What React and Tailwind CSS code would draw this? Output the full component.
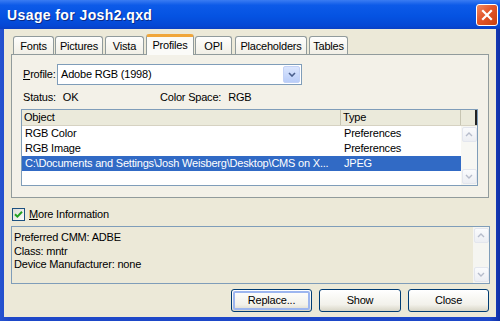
import React from "react";

function Chevron({ up = false, color = "#4d6185", w = 8, h = 5, sw = 1.6 }) {
  return (
    <svg width={w} height={h} viewBox="0 0 8 5">
      <path
        d={up ? "M1 4 L4 1 L7 4" : "M1 1 L4 4 L7 1"}
        fill="none"
        stroke={color}
        strokeWidth={sw}
      />
    </svg>
  );
}

function ScrollBtn({ up }) {
  return (
    <div className="w-[15px] h-[15px] rounded-[2px] border border-[#e3e6ee] bg-[linear-gradient(#fafbfd,#eceef3)] flex items-center justify-center">
      <Chevron up={up} color="#b6bccb" sw={1.4} />
    </div>
  );
}

const tabs = [
  { label: "Fonts", cls: "ml-0 w-[41px]" },
  { label: "Pictures", cls: "ml-[1px] w-[48px]" },
  { label: "Vista", cls: "ml-[2px] w-[39px]" },
  { label: "Profiles", cls: "ml-[2px] w-[48px]", active: true },
  { label: "OPI", cls: "ml-[1px] w-[37px]" },
  { label: "Placeholders", cls: "ml-[3px] w-[72px]" },
  { label: "Tables", cls: "ml-[2px] w-[39px]" },
];

export default function App() {
  return (
    <div className="w-[500px] h-[321px] overflow-hidden flex flex-col bg-[linear-gradient(90deg,#2654d0,#1d47c8_2%,#1d47c8_98%,#0e2fa6)] font-['Liberation_Sans',Arial,sans-serif] text-[11px] tracking-[-0.2px] leading-none text-black">
      {/* Title bar */}
      <div className="h-[29px] shrink-0 flex items-center justify-between pl-[7px] pr-[2px] bg-[linear-gradient(#3a7cf2,#0c5ae8_18%,#0553e2_55%,#0547d4_90%,#0a3fc4)]">
        <span className="text-white font-bold text-[14px] tracking-[0.4px] [text-shadow:1px_1px_0_#0b2a86]">
          Usage for Josh2.qxd
        </span>
        <div className="w-[22px] h-[22px] mt-[1px] rounded-[3px] border border-white bg-[linear-gradient(135deg,#f08a62,#e2552a_45%,#c9400f)] flex items-center justify-center">
          <svg width="12" height="12" viewBox="0 0 12 12">
            <path d="M2 2 L10 10 M10 2 L2 10" stroke="white" strokeWidth="2.2" strokeLinecap="square" />
          </svg>
        </div>
      </div>

      {/* Body */}
      <div className="flex-1 mx-[4px] mb-[4px] bg-[#ece9d8] flex flex-col">
        {/* Tabs */}
        <div className="flex items-end h-[20px] mt-[5px] pl-[9px] relative z-10">
          {tabs.map((t) =>
            t.active ? (
              <div
                key={t.label}
                className={`${t.cls} h-[21px] -mb-[1px] flex items-center justify-center bg-[#fbfbf8] border-x border-[#919b9c] rounded-t-[3px] border-t-[3px] border-t-[#f0a63a] pb-[2px]`}
              >
                {t.label}
              </div>
            ) : (
              <div
                key={t.label}
                className={`${t.cls} h-[18px] flex items-center justify-center border border-b-0 border-[#919b9c] rounded-t-[3px] bg-[linear-gradient(#fefefd,#f1efe6)] pt-[1px]`}
              >
                {t.label}
              </div>
            )
          )}
        </div>

        {/* Panel */}
        <div className="ml-[7px] w-[478px] h-[144px] border border-[#919b9c] bg-[#f3f1e8] pt-[9px] pl-[9px] flex flex-col">
          <div className="flex items-center h-[21px]">
            <span className="ml-[2px] w-[34px]">
              <span className="underline">P</span>rofile:
            </span>
            <div className="w-[245px] h-[21px] border border-[#7f9db9] bg-white flex items-center justify-between pl-[3px] pr-[1px]">
              <span>Adobe RGB (1998)</span>
              <div className="w-[17px] h-[17px] rounded-[2px] border border-[#c3d2f6] bg-[linear-gradient(#dbe6fe,#b9cdf8)] flex items-center justify-center">
                <Chevron color="#4a5f8c" />
              </div>
            </div>
          </div>

          <div className="flex items-center h-[14px] mt-[5px] ml-[2px]">
            <span className="w-[137px]">
              Status:<span className="ml-[7px]">OK</span>
            </span>
            <span>
              Color Space:<span className="ml-[7px]">RGB</span>
            </span>
          </div>

          {/* List */}
          <div className="mt-[5px] w-[457px] h-[77px] border border-[#7f9db9] bg-white flex flex-col">
            <div className="h-[16px] flex bg-[#ebeadb] border-b border-[#d6d2c2]">
              <div className="w-[319px] pl-[2px] flex items-center border-r border-[#c7c5b2]">Object</div>
              <div className="w-[120px] pl-[2px] flex items-center border-r border-[#c7c5b2]">Type</div>
              <div className="flex-1 border-r-2 border-[#222]"></div>
            </div>
            <div className="flex flex-1">
              <div className="flex-1 flex flex-col">
                <div className="h-[15px] flex items-center">
                  <span className="w-[319px] pl-[3px]">RGB Color</span>
                  <span className="pl-[3px]">Preferences</span>
                </div>
                <div className="h-[15px] flex items-center">
                  <span className="w-[319px] pl-[3px]">RGB Image</span>
                  <span className="pl-[3px]">Preferences</span>
                </div>
                <div className="h-[15px] flex items-center bg-[#316ac5] text-white">
                  <span className="w-[319px] pl-[3px] whitespace-nowrap overflow-hidden">
                    C:\Documents and Settings\Josh Weisberg\Desktop\CMS on X...
                  </span>
                  <span className="pl-[3px]">JPEG</span>
                </div>
              </div>
              <div className="w-[16px] bg-[#f7f7f3] flex flex-col justify-between items-center py-[1px]">
                <ScrollBtn up />
                <ScrollBtn />
              </div>
            </div>
          </div>
        </div>

        {/* Checkbox */}
        <div className="flex items-center mt-[10px] ml-[8px] h-[13px]">
          <div className="w-[13px] h-[13px] border border-[#1c5180] bg-[linear-gradient(135deg,#dcdcd7,#fbfbf9)] flex items-center justify-center">
            <svg width="9" height="9" viewBox="0 0 9 9">
              <path d="M1 4.2 L3.4 6.6 L8 1.8" fill="none" stroke="#21a121" strokeWidth="2" />
            </svg>
          </div>
          <span className="ml-[4px]">
            <span className="underline">M</span>ore Information
          </span>
        </div>

        {/* Info box */}
        <div className="mt-[5px] ml-[7px] w-[479px] h-[58px] border border-[#7f9db9] bg-[#ece9d8] flex">
          <div className="flex-1 pl-[2px] pt-[4px] flex flex-col">
            <div className="h-[13.5px] flex items-center">Preferred CMM: ADBE</div>
            <div className="h-[13.5px] flex items-center">Class: mntr</div>
            <div className="h-[13.5px] flex items-center">Device Manufacturer: none</div>
          </div>
          <div className="w-[16px] bg-[#f5f5f1] flex flex-col justify-between items-center py-[1px]">
            <ScrollBtn up />
            <ScrollBtn />
          </div>
        </div>

        {/* Buttons */}
        <div className="flex justify-end mt-[5px] mr-[7px] gap-[7px]">
          <div className="w-[81px] h-[23px] rounded-[3px] border border-[#003c74] bg-[linear-gradient(#ffffff,#f2f1ea_70%,#d8d5c6)] p-[1px]">
            <div className="w-full h-full rounded-[2px] border-2 border-[#9db6ef] flex items-center justify-center">
              Replace...
            </div>
          </div>
          <div className="w-[82px] h-[23px] rounded-[3px] border border-[#003c74] bg-[linear-gradient(#ffffff,#f2f1ea_70%,#d8d5c6)] flex items-center justify-center">
            Show
          </div>
          <div className="w-[81px] h-[23px] rounded-[3px] border border-[#003c74] bg-[linear-gradient(#ffffff,#f2f1ea_70%,#d8d5c6)] flex items-center justify-center">
            Close
          </div>
        </div>
      </div>
    </div>
  );
}
